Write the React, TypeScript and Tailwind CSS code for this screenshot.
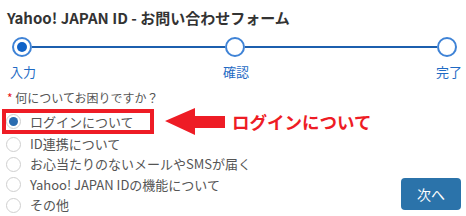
import React from 'react'

const options = [
    "ID連携について",
    "お心当たりのないメールやSMSが届く",
    "Yahoo! JAPAN IDの機能について",
    "その他",
]

const Radio = ({ checked }: { checked?: boolean }) => (
    <span className="w-[15px] h-[15px] rounded-full border border-[#cfcfcf] bg-white flex items-center justify-center shrink-0">
        {checked && <span className="w-[9px] h-[9px] rounded-full bg-[#2a6cb0]" />}
    </span>
)

const App = () => {
    return (
        <main className="w-[466px] h-[216px] bg-white overflow-hidden flex flex-col font-['Noto_Sans_CJK_JP',sans-serif]">
            <h1 className="pt-[8px] pl-[7px] text-[15px] leading-[20px] font-bold text-[#333]">
                Yahoo! JAPAN ID - お問い合わせフォーム
            </h1>

            {/* stepper */}
            <div className="mt-[9px] h-[20px] flex items-center pl-[12px] pr-[9px]">
                <span className="w-[20px] h-[20px] rounded-full border-2 border-[#3f83d6] flex items-center justify-center shrink-0">
                    <span className="w-[10px] h-[10px] rounded-full bg-[#0f62c8]" />
                </span>
                <span className="w-[193px] h-[2px] bg-[#1c5fae]" />
                <span className="w-[20px] h-[20px] rounded-full border-2 border-[#3f83d6] shrink-0" />
                <span className="flex-1 h-[2px] bg-[#1c5fae]" />
                <span className="w-[20px] h-[20px] rounded-full border-2 border-[#3f83d6] shrink-0" />
            </div>
            <div className="mt-[6px] flex justify-between pl-[10px] pr-[4px] text-[13px] leading-[17px] text-[#1f6bc4]">
                <span>入力</span>
                <span>確認</span>
                <span>完了</span>
            </div>

            <p className="mt-[10px] h-[15px] pl-[7px] text-[12px] leading-[15px] text-[#555]">
                <span className="text-[#e8141c]">*</span> 何についてお困りですか？
            </p>

            <div className="flex flex-1">
                <div className="flex flex-col">
                    <div className="mt-[4px] h-[25px] flex items-center">
                        <label className="ml-[2px] w-[152px] h-[25px] border-4 border-[#ee1c25] flex items-center gap-[9px] text-[13px] text-[#555]">
                            <Radio checked />
                            ログインについて
                        </label>
                        <svg className="ml-[11px] shrink-0 -my-[2px]" width="60" height="28" viewBox="0 0 60 28">
                            <polygon points="0,13 30,0 30,8 60,8 60,20 30,20 30,27" fill="#ee1c25" />
                        </svg>
                        <span className="ml-[7px] text-[17.5px] leading-[20px] font-bold text-[#ee1c25] whitespace-nowrap">ログインについて</span>
                    </div>
                    {options.map((o) => (
                        <label key={o} className="ml-[6px] h-[20.3px] flex items-center gap-[9px] text-[13px] leading-[20px] text-[#555]">
                            <Radio />
                            {o}
                        </label>
                    ))}
                </div>
                <button className="ml-auto self-end mb-[6px] mr-[5px] w-[60px] h-[32px] rounded-[4px] bg-[#2b73aa] text-white text-[14px]">
                    次へ
                </button>
            </div>
        </main>
    )
}

export default App
